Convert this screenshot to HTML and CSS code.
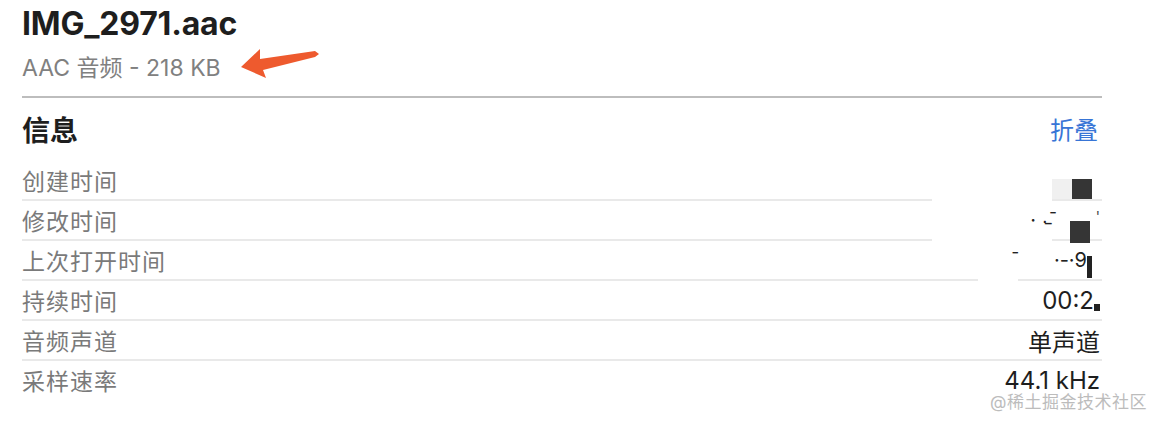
FILE: index.html
```html
<!DOCTYPE html>
<html lang="zh-CN">
<head>
    <meta charset="UTF-8">
    <meta name="viewport" content="width=device-width, initial-scale=1.0">
    <title>IMG_2971.aac</title>
    <link rel="stylesheet" href="styles.css">
</head>
<body>
    <div class="panel">
        <div class="file-head">
            <div class="file-name">IMG_2971.aac</div>
            <div class="file-kind">AAC 音频 - 218 KB</div>
            <svg class="arrow" width="84" height="38" viewBox="0 0 84 38">
                <polygon points="3,23 22,5 22,15 77,7 81,10 77,13 25,26 28,34" fill="#ee5a2e"/>
            </svg>
        </div>
        <div class="section-head">
            <span class="section-title">信息</span>
            <span class="section-toggle">折叠</span>
        </div>
        <div class="info-list">
            <div class="mask mask-a"></div>
            <div class="mask mask-b"></div>
            <div class="info-row">
                <span class="label">创建时间</span>
                <span class="value bottom"><i class="px light"></i><i class="px dark"></i></span>
            </div>
            <div class="info-row">
                <span class="label">修改时间</span>
                <span class="value"><span class="smudge">· ·̵ˉ</span><i class="px dark low"></i><span class="tick">'</span></span>
            </div>
            <div class="info-row">
                <span class="label">上次打开时间</span>
                <span class="value"><span class="smudge wide">ˉ&nbsp;&nbsp;&nbsp;&nbsp;&nbsp;&nbsp;·-·9</span><i class="px cut"></i></span>
            </div>
            <div class="info-row">
                <span class="label">持续时间</span>
                <span class="value">00:2<i class="px nub"></i></span>
            </div>
            <div class="info-row">
                <span class="label">音频声道</span>
                <span class="value">单声道</span>
            </div>
            <div class="info-row last">
                <span class="label">采样速率</span>
                <span class="value">44.1 kHz</span>
            </div>
        </div>
    </div>
    <div class="watermark">@稀土掘金技术社区</div>
</body>
</html>
```

FILE: styles.css
```css
body {
    margin: 0;
    background: #fff;
    font-family: "Inter", "Noto Sans CJK SC", sans-serif;
    color: #222;
    position: relative;
    height: 426px;
    overflow: hidden;
}
.panel {
    width: 1080px;
    margin-left: 22px;
    padding-top: 6px;
}
.file-head {
    position: relative;
    border-bottom: 2px solid #bdbdbd;
    padding-bottom: 14px;
}
.file-name {
    font-size: 32px;
    font-weight: 700;
    line-height: 36px;
    color: #1e1e1e;
    letter-spacing: -0.2px;
}
.file-kind {
    font-size: 23px;
    line-height: 28px;
    margin-top: 12px;
    color: #808080;
}
.arrow {
    position: absolute;
    left: 216px;
    top: 38px;
}
.section-head {
    display: flex;
    justify-content: space-between;
    align-items: center;
    height: 63px;
}
.section-title {
    font-size: 28px;
    font-weight: 700;
    color: #1e1e1e;
    margin-top: -2px;
}
.section-toggle {
    font-size: 24px;
    color: #3875d6;
    margin-right: 4px;
    margin-top: -2px;
}
.info-list {
    position: relative;
}
.info-row {
    display: flex;
    justify-content: space-between;
    align-items: center;
    height: 38px;
    border-bottom: 2px solid #e9e9e9;
}
.info-row.last {
    border-bottom: none;
}
.label {
    font-size: 23px;
    color: #7a7a7a;
    letter-spacing: 1px;
}
.value {
    position: relative;
    display: flex;
    align-items: flex-end;
    font-size: 24px;
    color: #1e1e1e;
    padding-right: 2px;
}
.value.bottom {
    align-self: flex-end;
}
.px {
    display: inline-block;
    width: 20px;
    height: 20px;
}
.px.light {
    background: #f0f0f0;
}
.px.dark {
    background: #353535;
    margin-right: 8px;
}
.px.low {
    margin-right: 0;
    height: 22px;
    margin-bottom: -11px;
}
.px.cut {
    width: 5px;
    height: 22px;
    background: #222;
    margin-right: 8px;
    margin-bottom: -6px;
}
.px.nub {
    width: 6px;
    height: 7px;
    background: #222;
    margin-right: 0;
    margin-bottom: 4px;
}
.smudge {
    font-size: 20px;
    color: #222;
    margin-right: 12px;
}
.smudge.wide {
    margin-right: 0;
}
.tick {
    font-size: 14px;
    color: #444;
    margin-left: 6px;
    align-self: flex-start;
}
.mask {
    position: absolute;
    background: #fff;
}
.mask-a {
    left: 910px;
    top: 34px;
    width: 120px;
    height: 50px;
}
.mask-b {
    left: 956px;
    top: 114px;
    width: 40px;
    height: 8px;
}
.watermark {
    position: absolute;
    left: 990px;
    top: 388px;
    font-size: 17px;
    color: #bcbcbc;
    letter-spacing: 0.5px;
}
```
